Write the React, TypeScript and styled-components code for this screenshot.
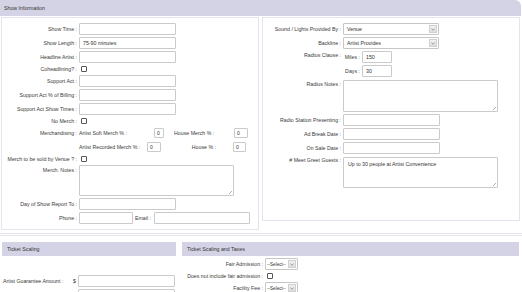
import React from 'react'
import styled, { createGlobalStyle } from 'styled-components'

const GlobalStyle = createGlobalStyle`
  html, body {
    margin: 0;
    padding: 0;
    background: #ffffff;
  }
  body {
    font-family: "Liberation Sans", Arial, sans-serif;
    font-size: 5.25px;
    color: #3a3a3a;
  }
`

const Page = styled.div`
  width: 522px;
  overflow: hidden;
`

const SectionBar = styled.div`
  height: 16px;
  margin-right: 1px;
  padding-left: 4px;
  display: flex;
  align-items: center;
  background: #d4d3e6;
  border-top-right-radius: 6px;
  color: #333;
`

const Columns = styled.div`
  display: grid;
  grid-template-columns: 258px 258px;
  gap: 3px;
  padding: 1px 0 0 1px;
  align-items: start;
`

const Panel = styled.div<{ $padBottom: number }>`
  border: 1px solid #e4e4ef;
  padding: 4px 0 ${({ $padBottom }) => $padBottom}px 0;
`

const Row = styled.div<{ $label: number; $h?: number; $top?: boolean }>`
  display: grid;
  grid-template-columns: ${({ $label }) => $label}px 1fr;
  align-items: ${({ $top }) => ($top ? 'start' : 'center')};
  min-height: ${({ $h }) => $h ?? 14}px;
`

const Label = styled.div<{ $pt?: number }>`
  text-align: right;
  padding-right: 2px;
  padding-top: ${({ $pt }) => $pt ?? 0}px;
  white-space: nowrap;
`

const Input = styled.div<{ $w: number }>`
  box-sizing: border-box;
  width: ${({ $w }) => $w}px;
  height: 12px;
  border: 1px solid #cacaca;
  border-radius: 1px;
  background: #fff;
  padding-left: 3px;
  display: flex;
  align-items: center;
  color: #333;
`

const SmallInput = styled(Input)`
  height: 10px;
  padding-left: 2px;
  font-size: 5px;
`

const TextArea = styled.div<{ $w: number; $h: number; $mt: number }>`
  position: relative;
  box-sizing: border-box;
  width: ${({ $w }) => $w}px;
  height: ${({ $h }) => $h}px;
  margin: ${({ $mt }) => $mt}px 0 1px 0;
  border: 1px solid #cacaca;
  border-radius: 1px;
  padding: 3px 4px;
  color: #333;
`

const Grip = styled.span`
  position: absolute;
  right: 1px;
  bottom: 1px;
  width: 3px;
  height: 3px;
  background: linear-gradient(135deg, transparent 45%, #b0b0b0 45%, #b0b0b0 55%, transparent 55%, transparent 70%, #b0b0b0 70%, #b0b0b0 80%, transparent 80%);
`

const Check = styled.span`
  box-sizing: border-box;
  display: block;
  width: 6px;
  height: 6px;
  margin-left: 2px;
  border: 1px solid #555;
  border-radius: 1px;
  background: #fff;
`

const SelectBox = styled.div<{ $w: number }>`
  box-sizing: border-box;
  width: ${({ $w }) => $w}px;
  height: 12px;
  border: 1px solid #c6c6c6;
  border-radius: 1px;
  display: flex;
  align-items: stretch;
  background: #fff;
`

const SelectText = styled.span<{ $compact?: boolean }>`
  flex: 1;
  display: flex;
  align-items: center;
  padding-left: ${({ $compact }) => ($compact ? 1 : 3)}px;
  font-size: ${({ $compact }) => ($compact ? '4.6px' : 'inherit')};
  white-space: nowrap;
  overflow: hidden;
  color: #333;
`

const SelectArrow = styled.span`
  width: 6px;
  margin: 1px;
  border: 1px solid #d0d0d0;
  background: linear-gradient(#f2f2f2, #dedede);
  display: flex;
  align-items: center;
  justify-content: center;
  svg {
    width: 4px;
    height: 3px;
  }
`

const MerchBlock = styled.div`
  display: flex;
  flex-direction: column;
`

const MerchLine = styled.div`
  display: flex;
  align-items: center;
  height: 14px;
`

const MerchLabel = styled.span<{ $w: number; $right?: boolean; $before?: number; $after?: number }>`
  width: ${({ $w }) => $w}px;
  text-align: ${({ $right }) => ($right ? 'right' : 'left')};
  margin-left: ${({ $before }) => $before ?? 0}px;
  margin-right: ${({ $after }) => $after ?? 0}px;
  white-space: nowrap;
`

const Inline = styled.div`
  display: flex;
  align-items: center;
  gap: 1px;
`

const InlineLabel = styled.span`
  width: 17px;
  text-align: right;
  padding-right: 2px;
  white-space: nowrap;
`

const RadiusBlock = styled.div`
  display: flex;
  flex-direction: column;
`

const RadiusLine = styled.div`
  display: flex;
  align-items: center;
  height: 14px;
`

const Divider = styled.div`
  margin: 3px 0 0 0;
  height: 1px;
  border-top: 1px solid #e4e4ef;
  border-bottom: 1px solid #e4e4ef;
`

const TicketColumns = styled.div`
  display: grid;
  grid-template-columns: 174px 337px;
  gap: 6px;
  padding: 6px 0 0 2px;
  align-items: start;
`

const SubBar = styled.div`
  height: 14px;
  padding-left: 5px;
  display: flex;
  align-items: center;
  background: #d4d3e6;
  color: #333;
`

const TicketBody = styled.div<{ $pt: number }>`
  padding-top: ${({ $pt }) => $pt}px;
`

const GuaranteeRow = styled.div`
  display: grid;
  grid-template-columns: 71px 5px 1fr;
  align-items: center;
  height: 14px;
`

const GuaranteeLabel = styled.span`
  padding-left: 1px;
  white-space: nowrap;
`

const Chevron = () => (
  <svg viewBox="0 0 4 3">
    <path d="M0.5 0.8 L2 2.2 L3.5 0.8" fill="none" stroke="#777" strokeWidth="0.7" />
  </svg>
)

const Select = ({ value, w, compact }: { value: string; w: number; compact?: boolean }) => (
  <SelectBox $w={w}>
    <SelectText $compact={compact}>{value}</SelectText>
    <SelectArrow>
      <Chevron />
    </SelectArrow>
  </SelectBox>
)

const leftRows = ['Show Time :', 'Show Length :', 'Headline Artist :']

const App = () => {
  return (
    <Page>
      <GlobalStyle />
      <SectionBar>Show Information</SectionBar>
      <Columns>
        <Panel $padBottom={4}>
          {leftRows.map((l) => (
            <Row key={l} $label={77}>
              <Label>{l}</Label>
              <Input $w={97}>{l === 'Show Length :' ? '75-90 minutes' : ''}</Input>
            </Row>
          ))}
          <Row $label={77} $h={10}>
            <Label>Coheadlining? :</Label>
            <Check />
          </Row>
          <Row $label={77}>
            <Label>Support Act :</Label>
            <Input $w={97} />
          </Row>
          <Row $label={77}>
            <Label>Support Act % of Billing :</Label>
            <Input $w={97} />
          </Row>
          <Row $label={77}>
            <Label>Support Act Show Times :</Label>
            <Input $w={97} />
          </Row>
          <Row $label={77} $h={10}>
            <Label>No Merch :</Label>
            <Check />
          </Row>
          <Row $label={77} $top>
            <Label $pt={4}>Merchandising :</Label>
            <MerchBlock>
              <MerchLine>
                <MerchLabel $w={75}>Artist Soft Merch % :</MerchLabel>
                <SmallInput $w={10}>0</SmallInput>
                <MerchLabel $w={60} $before={10}>House Merch % :</MerchLabel>
                <SmallInput $w={14}>0</SmallInput>
              </MerchLine>
              <MerchLine>
                <MerchLabel $w={68}>Artist Recorded Merch % :</MerchLabel>
                <SmallInput $w={14}>0</SmallInput>
                <MerchLabel $w={55} $right $after={17}>House % :</MerchLabel>
                <SmallInput $w={13}>0</SmallInput>
              </MerchLine>
            </MerchBlock>
          </Row>
          <Row $label={77} $h={10}>
            <Label>Merch to be sold by Venue ? :</Label>
            <Check />
          </Row>
          <Row $label={77} $top>
            <Label $pt={3}>Merch. Notes :</Label>
            <TextArea $w={155} $h={31} $mt={1}>
              <Grip />
            </TextArea>
          </Row>
          <Row $label={77}>
            <Label>Day of Show Report To :</Label>
            <Input $w={97} />
          </Row>
          <Row $label={77}>
            <Label>Phone :</Label>
            <Inline>
              <Input $w={54} />
              <InlineLabel>Email :</InlineLabel>
              <Input $w={96} />
            </Inline>
          </Row>
        </Panel>

        <Panel $padBottom={31}>
          <Row $label={80}>
            <Label>Sound / Lights Provided By :</Label>
            <Select value="Venue" w={96} />
          </Row>
          <Row $label={80}>
            <Label>Backline :</Label>
            <Select value="Artist Provides" w={96} />
          </Row>
          <Row $label={80} $top>
            <Label $pt={2}>Radius Clause :</Label>
            <RadiusBlock>
              <RadiusLine>
                <InlineLabel>Miles :</InlineLabel>
                <Input $w={30}>150</Input>
              </RadiusLine>
              <RadiusLine>
                <InlineLabel>Days :</InlineLabel>
                <Input $w={30}>30</Input>
              </RadiusLine>
            </RadiusBlock>
          </Row>
          <Row $label={80} $top>
            <Label $pt={3}>Radius Notes :</Label>
            <TextArea $w={155} $h={32} $mt={2}>
              <Grip />
            </TextArea>
          </Row>
          <Row $label={80}>
            <Label>Radio Station Presenting :</Label>
            <Input $w={97} />
          </Row>
          <Row $label={80}>
            <Label>Ad Break Date :</Label>
            <Input $w={97} />
          </Row>
          <Row $label={80}>
            <Label>On Sale Date :</Label>
            <Input $w={97} />
          </Row>
          <Row $label={80} $top>
            <Label $pt={2}>&#35; Meet Greet Guests :</Label>
            <TextArea $w={155} $h={31} $mt={2}>
              Up to 30 people at Artist Convenience
              <Grip />
            </TextArea>
          </Row>
        </Panel>
      </Columns>

      <Divider />

      <TicketColumns>
        <div>
          <SubBar>Ticket Scaling</SubBar>
          <TicketBody $pt={18}>
            <GuaranteeRow>
              <GuaranteeLabel>Artist Guarantee Amount :</GuaranteeLabel>
              <span>$</span>
              <Input $w={97} />
            </GuaranteeRow>
            <GuaranteeRow>
              <span />
              <span />
              <Input $w={97} />
            </GuaranteeRow>
          </TicketBody>
        </div>
        <div>
          <SubBar>Ticket Scaling and Taxes</SubBar>
          <TicketBody $pt={1}>
            <Row $label={83}>
              <Label>Fair Admission :</Label>
              <Select value="--Select--" w={33} compact />
            </Row>
            <Row $label={83} $h={10}>
              <Label>Does not include fair admission :</Label>
              <Check />
            </Row>
            <Row $label={83}>
              <Label>Facility Fee :</Label>
              <Select value="--Select--" w={33} compact />
            </Row>
          </TicketBody>
        </div>
      </TicketColumns>
    </Page>
  )
}

export default App
